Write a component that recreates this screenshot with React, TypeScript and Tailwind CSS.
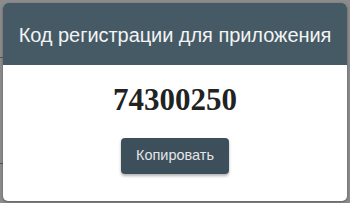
export default function App() {
  return (
    <div className="relative h-[203px] w-[350px] overflow-hidden bg-[#8c8c8c] font-['Liberation_Sans',Arial,sans-serif]">
      {/* page behind the dimmed backdrop */}
      <div className="absolute left-0 top-[57px] h-px w-[3px] bg-[#555]" />
      <div className="absolute left-0 top-[163px] h-px w-[3px] bg-[#555]" />

      <div className="absolute left-[3px] top-[3px] flex h-[198px] w-[344px] flex-col overflow-hidden rounded-[5px] bg-white shadow-[0_1px_3px_rgba(0,0,0,0.35)]">
        <div className="flex h-[62px] shrink-0 items-center justify-center bg-[#455a64]">
          <h2 className="whitespace-nowrap pt-[1px] text-[20px] tracking-[-0.05px] text-[#f2f4f5]">
            Код регистрации для приложения
          </h2>
        </div>
        <div className="flex flex-1 flex-col items-center">
          <div className="mt-[17px] font-['Liberation_Serif','Times_New_Roman',serif] text-[31px] font-bold leading-[36px] text-[#222]">
            74300250
          </div>
          <button className="mt-[20px] h-[36px] w-[108px] rounded-[4px] bg-[#3d4f5a] text-[14.5px] text-[#e3e6e8] shadow-[0_2px_3px_rgba(0,0,0,0.3)]">
            Копировать
          </button>
        </div>
      </div>
    </div>
  );
}
